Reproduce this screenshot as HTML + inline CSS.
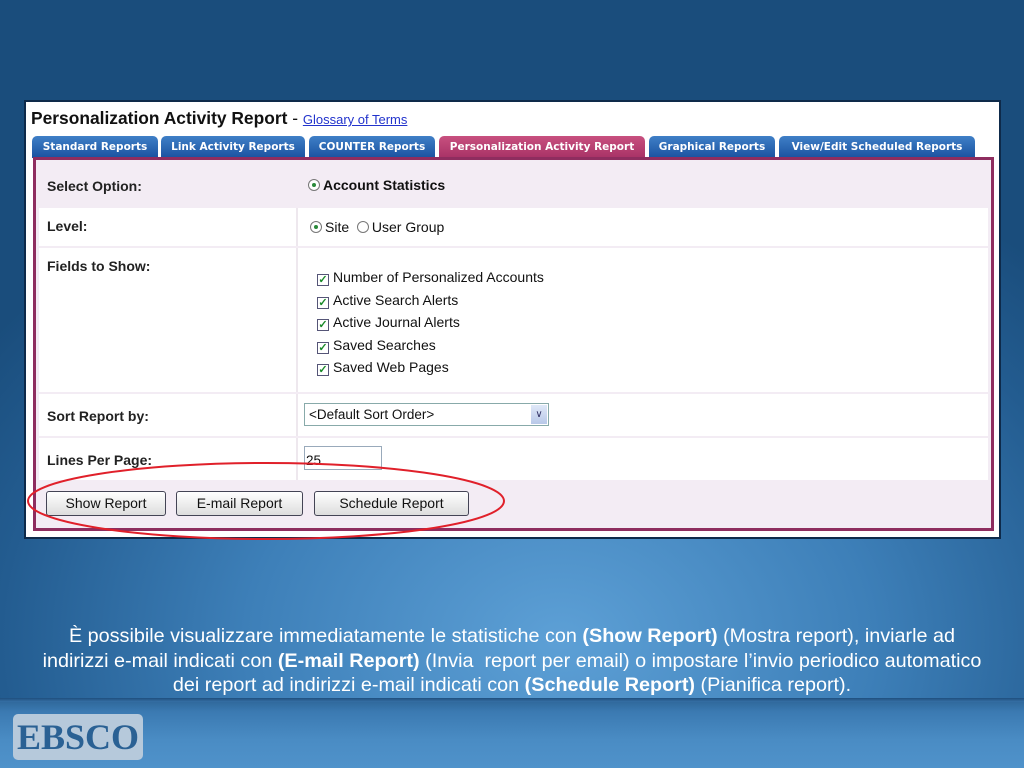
<!DOCTYPE html>
<html><head><style>
*{margin:0;padding:0;box-sizing:border-box}
body{width:1024px;height:768px;overflow:hidden;position:relative;font-family:"Liberation Sans",sans-serif;
background:radial-gradient(ellipse 700px 520px at 560px 640px,#5da0d6 0%,#3d7fb8 45%,#235c90 80%,#1a4d7c 100%);}
.band{position:absolute;left:0;top:698px;width:1024px;height:70px;background:linear-gradient(#2c6395,#3b7ab2 20%,#4a8cc4 60%,#4f92ca);}
.band:before{content:"";position:absolute;left:0;top:0;width:100%;height:4px;background:linear-gradient(#1f4f7e,#3670a6)}
.shot{position:absolute;left:24px;top:100px;width:977px;height:439px;background:#fff;border:2px solid #0e2a4a;}
.title{position:absolute;left:5px;top:6px;font-size:17.4px;font-weight:bold;color:#111}
.title span{font-weight:normal}
.title a{font-size:13px;color:#2233cc;text-decoration:underline;font-weight:normal}
.tab{position:absolute;top:34px;height:22px;border-radius:5px 5px 0 0;background:linear-gradient(#3f7fc7,#1a52a0);color:#fff;font-family:"DejaVu Sans",sans-serif;font-weight:bold;font-size:10.5px;text-align:center;line-height:22px;white-space:nowrap}
.tab.on{background:linear-gradient(#c8507f,#a83266)}
.panel{position:absolute;left:7px;top:55px;width:961px;height:374px;border:3px solid #8e2d5f;background:#f3ecf4}
.row{position:absolute;left:3px;width:949px;background:#fff;font-size:14px;font-weight:bold;color:#222}
.row .l{position:absolute;left:8px}
.row .r{position:absolute;left:257px;top:0;bottom:0;border-left:2px solid #eee8ee;font-weight:normal;color:#111;padding-left:12px}
.rad{display:inline-block;width:12px;height:12px;border:1px solid #777;border-radius:50%;vertical-align:-1px;margin-right:3px;background:#fff;position:relative}
.rad.on:after{content:"";position:absolute;left:3px;top:3px;width:4px;height:4px;border-radius:50%;background:#2a8a3a}
.cb{display:inline-block;width:12px;height:12px;border:1px solid #557;vertical-align:-1px;margin-right:4px;background:#fff;color:#1a8a2a;font-size:11px;line-height:10px;text-align:center;font-weight:bold}
.btn{position:absolute;top:389px;height:25px;border:1px solid #445;border-radius:3px;background:linear-gradient(#fff,#ddd);font-size:14px;text-align:center;line-height:23px;color:#111}
.cap{position:absolute;left:0;top:624px;width:1024px;text-align:center;color:#fff;font-size:19.8px;line-height:24.5px}
.logo{position:absolute;left:13px;top:714px;width:130px;height:46px;background:#b6c9db;border-radius:5px;color:#2a6194;font-family:"Liberation Serif",serif;font-weight:bold;font-size:36px;text-align:center;line-height:47px}
</style></head><body>
<div class="band"></div>
<div class="shot">
<div class="title">Personalization Activity Report <span>- </span><a>Glossary of Terms</a></div>
<div class="tab" style="left:6px;width:126px">Standard Reports</div>
<div class="tab" style="left:135px;width:144px">Link Activity Reports</div>
<div class="tab" style="left:283px;width:126px">COUNTER Reports</div>
<div class="tab on" style="left:413px;width:206px">Personalization Activity Report</div>
<div class="tab" style="left:623px;width:126px">Graphical Reports</div>
<div class="tab" style="left:753px;width:196px">View/Edit Scheduled Reports</div>
<div class="panel">
<div class="row" style="top:2px;height:44px;background:#f3ecf4"><span class="l" style="top:16px">Select Option:</span><div class="r" style="border:none;font-weight:bold;padding-top:15px"><span class="rad on"></span>Account Statistics</div></div>
<div class="row" style="top:48px;height:38px"><span class="l" style="top:10px">Level:</span><div class="r" style="padding-top:11px"><span class="rad on"></span>Site &nbsp;<span class="rad"></span>User Group</div></div>
<div class="row" style="top:88px;height:144px"><span class="l" style="top:10px">Fields to Show:</span><div class="r" style="padding-top:18px;padding-left:19px;line-height:22.6px">
<div><span class="cb">✓</span>Number of Personalized Accounts</div><div><span class="cb">✓</span>Active Search Alerts</div><div><span class="cb">✓</span>Active Journal Alerts</div><div><span class="cb">✓</span>Saved Searches</div><div><span class="cb">✓</span>Saved Web Pages</div></div></div>
<div class="row" style="top:234px;height:42px"><span class="l" style="top:14px">Sort Report by:</span><div class="r"><div style="position:absolute;left:6px;top:9px;width:245px;height:23px;border:1px solid #8aa;font-size:13.5px;line-height:21px;padding-left:4px">&lt;Default Sort Order&gt;<span style="position:absolute;right:1px;top:1px;width:16px;height:19px;background:linear-gradient(#dfe8f8,#b8c8e8);font-size:10px;text-align:center;line-height:19px;color:#336">&#8744;</span></div></div></div>
<div class="row" style="top:278px;height:42px"><span class="l" style="top:14px">Lines Per Page:</span><div class="r"><div style="position:absolute;left:6px;top:8px;width:78px;height:24px;border:1px solid #9ab;font-size:13.5px;line-height:28px;padding-left:1px">25</div></div></div>
</div>
<div class="btn" style="left:20px;width:120px">Show Report</div>
<div class="btn" style="left:150px;width:127px">E-mail Report</div>
<div class="btn" style="left:288px;width:155px">Schedule Report</div>
<svg style="position:absolute;left:0;top:355px" width="490" height="90"><ellipse cx="240" cy="44" rx="238" ry="38" fill="none" stroke="#e0202a" stroke-width="2"/></svg>
</div>
<div class="cap">È possibile visualizzare immediatamente le statistiche con <b>(Show Report)</b> (Mostra report), inviarle ad<br>indirizzi e-mail indicati con <b>(E-mail Report)</b> (Invia&nbsp; report per email) o impostare l’invio periodico automatico<br>dei report ad indirizzi e-mail indicati con <b>(Schedule Report)</b> (Pianifica report).</div>
<div class="logo">EBSCO</div>
</body></html>
